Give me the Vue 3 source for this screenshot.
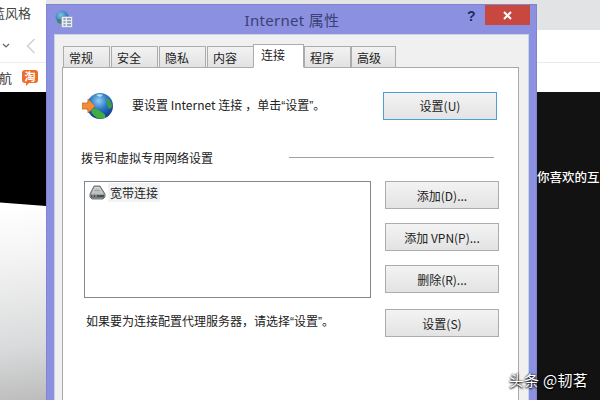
<script setup>
const tabs = [
  { label: '常规' }, { label: '安全' }, { label: '隐私' }, { label: '内容' },
  { label: '连接', active: true }, { label: '程序' }, { label: '高级' }
]
const sideButtons = [
  { label: '添加(D)...', cls: 'b1' },
  { label: '添加 VPN(P)...', cls: 'b2' },
  { label: '删除(R)...', cls: 'b3' }
]
</script>

<template>
  <div class="stage">
    <div class="left-col">
      <div class="l-top">
        <div class="l-title">蓝风格</div>
        <div class="l-nav">
          <svg width="10" height="6" viewBox="0 0 10 6" class="chev"><path d="M1 1l3 3 3-3" fill="none" stroke="#666" stroke-width="1.2"/></svg>
          <svg width="10" height="16" viewBox="0 0 10 16" class="back"><path d="M8.5 1L1.5 8l7 7" fill="none" stroke="#d2d2d2" stroke-width="1.6"/></svg>
        </div>
      </div>
      <div class="l-book">
        <span class="l-hang">航</span>
        <span class="tao">淘</span>
      </div>
      <div class="l-lower"><div class="l-black"></div></div>
    </div>

    <div class="right-col">
      <div class="r-gray"></div>
      <div class="r-white"></div>
      <div class="r-white2"></div>
      <div class="r-black"><span class="r-text">你喜欢的互</span></div>
    </div>

    <section class="window">
      <header class="titlebar">
        <svg class="title-icon" width="18" height="18" viewBox="0 0 18 18">
          <defs>
            <radialGradient id="tg" cx="40%" cy="35%" r="70%"><stop offset="0" stop-color="#7fc4ea"/><stop offset="1" stop-color="#1b5f9c"/></radialGradient>
          </defs>
          <circle cx="7" cy="7" r="6.5" fill="url(#tg)"/>
          <path d="M2 10c2-2 4-1 5 1l-2 3c-2-1-3-2-3-4z" fill="#3d8a6b"/>
          <rect x="6.5" y="6.5" width="11" height="11" fill="#e8ecf4" stroke="#8a94b8" stroke-width=".6"/>
          <path d="M8.5 9h2M12 9h4M8.5 12h2M12 12h4M8.5 15h2M12 15h4" stroke="#4a5a80" stroke-width="1"/>
        </svg>
        <span class="title-text">Internet 属性</span>
        <span class="help">?</span>
        <span class="close">
          <svg width="9" height="9" viewBox="0 0 9 9"><path d="M1 1l7 7M8 1L1 8" stroke="#fff" stroke-width="2"/></svg>
        </span>
      </header>

      <div class="panel">
        <nav class="tabs">
          <div v-for="t in tabs" :key="t.label" class="tab" :class="{ active: t.active }">{{ t.label }}</div>
        </nav>

        <div class="page">
          <div class="row-top">
            <svg class="globe" width="32" height="28" viewBox="0 0 32 28">
              <defs>
                <radialGradient id="gg" cx="45%" cy="30%" r="70%"><stop offset="0" stop-color="#8fd0f0"/><stop offset=".5" stop-color="#2a74c4"/><stop offset="1" stop-color="#123a86"/></radialGradient>
              </defs>
              <circle cx="18" cy="14" r="13" fill="url(#gg)"/>
              <path d="M9 17c5-2 9 2 12 4 2 1 3 3 2 5-5 2-10 0-13-5z" fill="#3fae3c"/>
              <path d="M25 6c3 1 5 5 5 9l-3 2c-2-3-3-7-2-11z" fill="#3a9e46"/>
              <path d="M14 3c2-1 5-1 7 0l-3 2z" fill="#b8e4f4"/>
              <path d="M0 11h6V7l7 7-7 7v-4H0z" fill="#f58a3c" stroke="#c86a24" stroke-width=".8"/>
            </svg>
            <span class="top-text">要设置 Internet 连接<span class="c">，</span>单击<span class="q">“</span>设置<span class="q">”</span>。</span>
            <button class="btn primary">设置(U)</button>
          </div>

          <div class="group">
            <span>拨号和虚拟专用网络设置</span>
            <i class="rule"></i>
          </div>

          <div class="mid">
            <div class="listbox">
              <div class="item">
                <svg width="17" height="15" viewBox="0 0 17 15">
                  <path d="M5 1h6l5 8v3l-2 2H3l-2-2V9z" fill="#9ea3a5" stroke="#55595b" stroke-width=".8"/>
                  <path d="M5.5 2h5l3.5 6.5H3z" fill="#d9dcdd"/>
                  <path d="M5.5 4h5M5 5.5h6.5M4.5 7h8" stroke="#8b8f91" stroke-width=".7"/>
                  <path d="M2 10h13v2.5H2z" fill="#4a4e50"/>
                  <path d="M3 11h2M6 11h2" stroke="#c8cccd" stroke-width=".8"/>
                </svg>
                <span class="item-text">宽带连接</span>
              </div>
            </div>
            <div class="side">
              <button v-for="b in sideButtons" :key="b.label" class="btn" :class="b.cls">{{ b.label }}</button>
            </div>
          </div>

          <div class="row-bottom">
            <span class="bottom-text">如果要为连接配置代理服务器，请选择<span class="q">“</span>设置<span class="q">”</span>。</span>
            <button class="btn b4">设置(S)</button>
          </div>
        </div>
      </div>
    </section>

    <div class="watermark">头条 @韧茗</div>
  </div>
</template>

<style>
html, body { margin: 0; background: #fff; }
</style>

<style scoped>
.stage {
  position: relative;
  width: 600px;
  height: 400px;
  overflow: hidden;
  display: flex;
  justify-content: space-between;
  background: linear-gradient(#e4e4e6 4px, #fff 4px);
  font-family: "Noto Sans CJK SC", "Noto Sans", sans-serif;
  color: #222;
}
.left-col { width: 46px; display: flex; flex-direction: column; background: #fff; }
.l-top { height: 62px; border-bottom: 1px solid #ececec; overflow: hidden; }
.l-title { margin: 1px 0 0 -8px; height: 24px; width: 60px; font-size: 13px; line-height: 24px; color: #444; white-space: nowrap; }
.l-nav { display: flex; align-items: center; height: 30px; margin-top: 6px; }
.chev { margin: 0 0 0 2px; }
.back { margin-left: 14px; }
.l-book { height: 29px; display: flex; align-items: center; overflow: hidden; }
.l-hang { margin-left: -1px; font-size: 13px; color: #333; width: 23px; flex: none; }
.tao {
  position: relative;
  width: 16px; height: 13px; flex: none; border-radius: 3px;
  background: #ee6c2a; color: #fff; font-size: 11px; line-height: 13px;
  text-align: center; font-weight: 700; margin-top: -3px;
}
.tao::after {
  content: ""; position: absolute; left: 4px; top: 13px;
  border-top: 3px solid #ee6c2a; border-right: 3px solid transparent;
}
.l-lower { flex: 1; background: linear-gradient(172deg, #fff 37%, #f5f5f5 52%, #d9dadb 82%, #bcbcbc 100%); }
.l-black { height: 114px; background: #000; clip-path: polygon(0 0, 100% 0, 100% 100%, 0 97%); }

.right-col { width: 63px; display: flex; flex-direction: column; }
.r-gray { height: 30px; background: #e2e3e5; }
.r-white { height: 32px; background: #fff; border-bottom: 1px solid #eaeaea; }
.r-white2 { height: 29px; background: #fff; }
.r-black { flex: 1; background: #121212; padding-top: 76px; overflow: hidden; }
.r-text { display: block; color: #fff; font-size: 12.5px; font-weight: 500; line-height: 18px; white-space: nowrap; margin-left: 0; }

.window {
  position: absolute;
  left: 46px; top: 4px;
  width: 491px; height: 396px;
  box-sizing: border-box;
  background: #8b90e0;
  border: 1px solid #7f84cc;
  border-bottom: 0;
  display: flex;
  flex-direction: column;
}
.titlebar { position: relative; height: 29px; flex: none; display: flex; align-items: center; justify-content: center; }
.title-icon { position: absolute; left: 8px; top: 5px; }
.title-text { font-family: "Noto Sans", "Noto Sans CJK SC", sans-serif; font-size: 15px; color: #3b3f74; letter-spacing: .3px; margin-left: 1px; }
.help { position: absolute; left: 420px; top: 1px; font: 700 14px/20px "Liberation Sans", sans-serif; color: #232a66; }
.close {
  position: absolute; right: 6px; top: 0; width: 45px; height: 20px;
  background: #c8483f; display: flex; align-items: center; justify-content: center;
}
.panel {
  flex: 1;
  margin: 0 7px;
  background: #f0f0f0;
  border: 1px solid #c8d4e8;
  border-bottom: 0;
  padding: 9px 9px 0 7px;
  display: flex;
  flex-direction: column;
  min-height: 0;
}
.tabs { display: flex; height: 24px; padding-left: 1px; flex: none; align-items: flex-end; position: relative; z-index: 1; margin-bottom: -1px; }
.tab {
  width: 47px; height: 22px; box-sizing: border-box; margin-right: 1px;
  background: linear-gradient(#f2f2f2, #e2e2e2);
  border: 1px solid #acacac;
  padding-left: 5px;
  font-size: 12px; line-height: 21px; color: #222;
}
.tab.active {
  width: 51px; height: 24px; margin: 0 0 0 -2px; padding-left: 7px; background: #fff;
  border-bottom-color: #fff; line-height: 20px; position: relative; z-index: 1;
}
.tab:last-child { width: 45px; margin-left: -1px; }
.page {
  flex: 1; background: #fff; border: 1px solid #a9a9a9; border-bottom: 0;
  display: flex; flex-direction: column; min-height: 0;
}
.row-top { display: flex; align-items: center; padding: 24px 21px 0 19px; height: 27px; }
.globe { flex: none; }
.top-text { margin-left: 18px; font-size: 12px; line-height: 16px; white-space: nowrap; }
.c { margin-left: 3px; }
.q { font-family: "Liberation Sans", sans-serif; }
.btn {
  box-sizing: border-box; padding: 0; font: inherit; font-size: 12px; color: #222;
  background: linear-gradient(#f3f3f3, #e3e3e3);
  border: 1px solid #acacac;
  width: 114px; height: 28px; flex: none;
}
.primary { margin-left: auto; border-color: #4f9ed8; }
.group { display: flex; align-items: center; margin-top: 28px; padding-left: 18px; font-size: 12px; line-height: 18px; }
.group span { width: 208px; flex: none; white-space: nowrap; padding-top: 2px; }
.rule { display: block; width: 205px; height: 1px; background: #a0a0a0; }
.mid { display: flex; margin-top: 14px; padding-left: 21px; }
.listbox { width: 287px; height: 117px; box-sizing: border-box; border: 1px solid #828790; padding: 1px 0 0 4px; flex: none; }
.item { display: flex; align-items: center; gap: 2px; }
.item-text { background: #f1f3f4; font-size: 12px; line-height: 19px; padding: 0 2px; }
.side { display: flex; flex-direction: column; margin-left: 14px; gap: 14px; }
.b1, .b2, .b3, .b4 { width: 114px; }
.row-bottom { display: flex; align-items: center; margin-top: 11px; padding-left: 23px; }
.bottom-text { font-size: 12px; line-height: 16px; white-space: nowrap; width: 299px; flex: none; margin-top: -4px; }
.watermark {
  position: absolute; right: 12px; bottom: 10px; color: #fff; font-size: 15px; line-height: 20px;
  letter-spacing: .3px;
  text-shadow: 0 0 2px #000, 0 1px 2px #000; white-space: nowrap;
}
</style>
